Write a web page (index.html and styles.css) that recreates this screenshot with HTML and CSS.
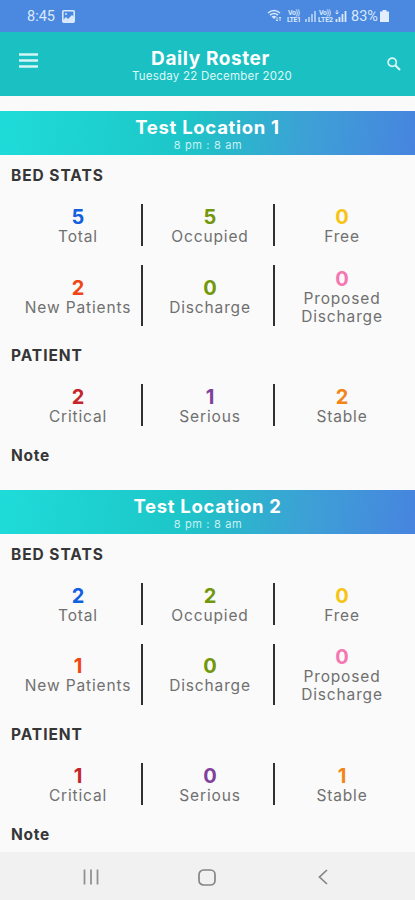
FILE: index.html
```html
<!DOCTYPE html>
<html lang="en">
<head>
<meta charset="utf-8">
<title>Daily Roster</title>
<link rel="stylesheet" href="styles.css">
</head>
<body>
<div class="status">
  <span class="time">8:45</span>
  <svg class="picture" width="13" height="13" viewBox="0 0 13 13"><rect x=".8" y=".8" width="11.4" height="11.4" rx="1" fill="none" stroke="#d9e9fc" stroke-width="1.6"/><path d="M1 10l3-3 2 2 4-4 2 2v5H1z" fill="#d9e9fc"/><circle cx="4" cy="4" r="1" fill="#d9e9fc"/></svg>
  <svg class="signals" width="82" height="16" viewBox="0 0 82 16" fill="none" stroke="#d9e9fc">
    <path d="M1 5q6-5 12 0M3 7q4-3 8 0" stroke-width="1.6"/><path d="M4.500 8.500q2.500-1.600 5 0L7 11z" fill="#d9e9fc" stroke="none"/><path d="M10 9v4M8.800 11.800l1.200 1.200 1.200-1.200M13 13V9M11.800 10.200L13 9l1.200 1.200" stroke-width=".9"/>
    <g fill="#d9e9fc" stroke="none" class="lte"><text x="21" y="7" textLength="12">Vo))</text><text x="20" y="14" textLength="14">LTE1</text><text x="52" y="7" textLength="12">Vo))</text><text x="51" y="14" textLength="15">LTE2</text></g>
    <path d="M39 11v3M42 9v5M45 6v8M48 3v11" stroke-width="1.700" opacity=".75"/>
    <path d="M69.500 11v3M72.500 9v5M75.500 6v8M78.500 3v11" stroke-width="1.800"/><path d="M70 2v4M68.500 4.500L70 6l1.500-1.500" stroke-width="1"/>
  </svg>
  <span class="percent">83%</span>
  <svg class="battery" width="9" height="12" viewBox="0 0 9 12"><path d="M2.500 0h4v1.500H9V12H0V1.500h2.500z" fill="#e2eefe"/></svg>
</div>
<header class="appbar">
  <svg class="menu" width="19" height="15" viewBox="0 0 19 15"><path d="M0 1.500h19M0 7.500h19M0 13.500h19" stroke="#d2f5f5" stroke-width="2.600"/></svg>
  <div class="heading"><h1>Daily Roster</h1><p>Tuesday 22 December 2020</p></div>
  <svg class="search" width="14" height="14" viewBox="0 0 14 14" fill="none" stroke="#dcf7f7"><circle cx="5.200" cy="5.200" r="4.100" stroke-width="1.700"/><path d="M8.200 8.200L13 13" stroke-width="2.100"/></svg>
</header>
<main>
  <section class="location">
    <div class="banner"><h2 class="name">Test Location 1</h2><p>8 pm : 8 am</p></div>
    <h3>BED STATS</h3>
    <div class="stats">
      <div class="stat"><b class="blue">5</b><span>Total</span></div>
      <div class="stat"><b class="green">5</b><span>Occupied</span></div>
      <div class="stat"><b class="yellow">0</b><span>Free</span></div>
    </div>
    <div class="stats tall">
      <div class="stat"><b class="red">2</b><span>New Patients</span></div>
      <div class="stat"><b class="green">0</b><span>Discharge</span></div>
      <div class="stat"><b class="pink">0</b><span>Proposed<br>Discharge</span></div>
    </div>
    <h3 class="patient">PATIENT</h3>
    <div class="stats">
      <div class="stat"><b class="crimson">2</b><span>Critical</span></div>
      <div class="stat"><b class="purple">1</b><span>Serious</span></div>
      <div class="stat"><b class="orange">2</b><span>Stable</span></div>
    </div>
    <h3 class="note">Note</h3>
  </section>
  <section class="location">
    <div class="banner"><h2 class="name">Test Location 2</h2><p>8 pm : 8 am</p></div>
    <h3>BED STATS</h3>
    <div class="stats">
      <div class="stat"><b class="blue">2</b><span>Total</span></div>
      <div class="stat"><b class="green">2</b><span>Occupied</span></div>
      <div class="stat"><b class="yellow">0</b><span>Free</span></div>
    </div>
    <div class="stats tall">
      <div class="stat"><b class="red">1</b><span>New Patients</span></div>
      <div class="stat"><b class="green">0</b><span>Discharge</span></div>
      <div class="stat"><b class="pink">0</b><span>Proposed<br>Discharge</span></div>
    </div>
    <h3 class="patient">PATIENT</h3>
    <div class="stats">
      <div class="stat"><b class="crimson">1</b><span>Critical</span></div>
      <div class="stat"><b class="purple">0</b><span>Serious</span></div>
      <div class="stat"><b class="orange">1</b><span>Stable</span></div>
    </div>
    <h3 class="note">Note</h3>
  </section>
</main>
<nav>
  <svg width="16" height="16" viewBox="0 0 16 16"><path d="M1.500 .5v15M8 .5v15M14.500 .5v15" stroke="#929292" stroke-width="1.800"/></svg>
  <svg class="home" width="18" height="17" viewBox="0 0 18 17"><rect x="1" y="1" width="16" height="15" rx="4.500" fill="none" stroke="#858585" stroke-width="1.700"/></svg>
  <svg width="10" height="16" viewBox="0 0 10 16"><path d="M9 1L1.500 8L9 15" fill="none" stroke="#858585" stroke-width="1.700"/></svg>
</nav>
</body>
</html>
```
FILE: styles.css
```css
* { box-sizing: border-box; }
body {
  margin: 0;
  height: 900px;
  display: flex;
  flex-direction: column;
  overflow: hidden;
  background: #fafafa;
  font-family: Inter, "Open Sans", sans-serif;
}
h1, h2, h3, p { margin: 0; }
svg { display: block; flex: none; }
.status {
  height: 32px;
  flex: none;
  display: flex;
  align-items: center;
  padding: 0 26px 0 27px;
  background: #4b88df;
  color: #d9e9fc;
  font: 14.5px Roboto, sans-serif;
}
.time { width: 35px; }
.signals { margin-left: auto; }
.lte { font: bold 7px Roboto, sans-serif; }
.percent { margin-left: 2px; width: 28px; }
.battery { margin-left: 1px; }
.appbar {
  height: 64px;
  flex: none;
  display: grid;
  grid-template-columns: 95px 1fr 95px;
  background: #1bc0c3;
  color: #fff;
}
.menu { margin: 21px 0 0 19px; }
.search { margin: 25px 0 0 67px; }
.heading { text-align: center; padding: 15px 0 0 6px; white-space: nowrap; }
h1 { font-size: 19px; line-height: 23px; font-weight: 650; letter-spacing: .6px; }
.heading p { padding-left: 3px; font-size: 11.5px; line-height: 12px; letter-spacing: .22px; color: #dbf8f7; }
main { flex: 1; min-height: 0; padding-top: 15px; overflow: hidden; }
.location { height: 378.6px; }
.banner {
  height: 44px;
  padding-top: 5px;
  text-align: center;
  color: #fff;
  background: linear-gradient(97deg, #1fdcd9 0%, #1dc6c9 44%, #24bdc9 51%, #3da0d6 74%, #4784df 100%);
}
.name { font-size: 18.5px; line-height: 23px; font-weight: 650; letter-spacing: .7px; }
.banner p { padding-left: 1px; font-size: 11px; line-height: 12px; letter-spacing: .65px; color: #c8f1f2; }
h3 {
  height: 49px;
  padding: 11.4px 0 0 11px;
  color: #363636;
  font-size: 15.5px;
  line-height: 20px;
  font-weight: 650;
  letter-spacing: .95px;
}
.stats {
  height: 42px;
  display: grid;
  grid-template-columns: 128px 132px 134px;
  padding-left: 15px;
}
.tall { height: 61px; margin-top: 19px; }
.stat {
  display: flex;
  flex-direction: column;
  align-items: center;
  justify-content: center;
  padding-top: 2px;
  border-right: 2px solid #2e3034;
  text-align: center;
}
.stat + .stat { padding-left: 4px; }
.stat:last-child { border-right: 0; padding-left: 0; }
.stat b { font-size: 20px; line-height: 22px; font-weight: 700; }
.stat span { font-size: 15.5px; line-height: 18px; letter-spacing: .85px; color: #707070; white-space: nowrap; }
.patient { height: 58px; padding-top: 20.4px; }
.note { padding-top: 20.4px; letter-spacing: .75px; }
.blue { color: #1260df; }
.green { color: #72970b; }
.yellow { color: #f7c413; }
.red { color: #f04615; }
.pink { color: #f576b0; }
.crimson { color: #c5252b; }
.purple { color: #80409c; }
.orange { color: #f28518; }
nav {
  height: 48px;
  flex: none;
  display: flex;
  align-items: center;
  justify-content: space-between;
  padding: 2px 87px 0 83px;
  background: #f1f1f1;
}
.home { margin-right: 3px; }
```
